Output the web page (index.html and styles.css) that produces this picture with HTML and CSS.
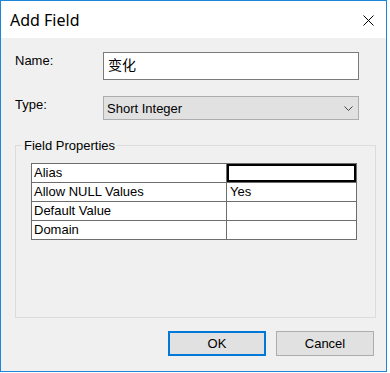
FILE: index.html
```html
<!DOCTYPE html>
<html lang="en">

<head>
  <meta charset="UTF-8" />
  <title>Add Field</title>
  <link rel="stylesheet" href="styles.css">
</head>

<body>
  <div class="window">
    <div class="titlebar">
      <span class="title">Add Field</span>
      <svg class="close" width="11" height="11" viewBox="0 0 11 11">
        <path d="M0.5 0.5 L10.5 10.5 M10.5 0.5 L0.5 10.5" stroke="#000" stroke-width="1" fill="none" />
      </svg>
    </div>

    <div class="content">
      <div class="row name-row">
        <span class="label">Name:</span>
        <div class="text-box">变化</div>
      </div>

      <div class="row type-row">
        <span class="label">Type:</span>
        <div class="combo">
          <span>Short Integer</span>
          <svg width="9" height="5" viewBox="0 0 9 5">
            <path d="M0.5 0.5 L4.5 4.5 L8.5 0.5" stroke="#444" stroke-width="1" fill="none" />
          </svg>
        </div>
      </div>

      <fieldset class="group">
        <legend>Field Properties</legend>
        <table class="props">
          <tr>
            <td class="key">Alias</td>
            <td class="val active"></td>
          </tr>
          <tr>
            <td class="key">Allow NULL Values</td>
            <td class="val">Yes</td>
          </tr>
          <tr>
            <td class="key">Default Value</td>
            <td class="val"></td>
          </tr>
          <tr>
            <td class="key">Domain</td>
            <td class="val"></td>
          </tr>
        </table>
      </fieldset>

      <div class="buttons">
        <button type="button" class="btn default">OK</button>
        <button type="button" class="btn">Cancel</button>
      </div>
    </div>
  </div>
</body>

</html>
```

FILE: styles.css
```css
* {
  margin: 0;
  padding: 0;
  box-sizing: border-box;
}

body {
  background: #fff;
  font-family: 'Liberation Sans', Arial, sans-serif;
  font-size: 13px;
  line-height: 15px;
  color: #000;
}

.window {
  width: 387px;
  height: 372px;
  border: 1px solid #1c87d9;
  background: #f0f0f0;
  display: flex;
  flex-direction: column;
}

.titlebar {
  height: 37px;
  background: #fff;
  display: flex;
  align-items: center;
  justify-content: space-between;
  padding: 0 12px 0 9px;
}

.title {
  font-family: 'Noto Sans', sans-serif;
  font-size: 16px;
  line-height: 18px;
}

.close {
  display: block;
  margin-top: 1px;
}

.content {
  padding: 14px 12px 0 14px;
}

.row {
  display: flex;
  align-items: flex-start;
}

.label {
  width: 88px;
  padding-top: 1px;
}

.text-box {
  width: 256px;
  height: 28px;
  background: #fff;
  border: 1px solid #7a7a7a;
  padding: 1px 0 0 4px;
  font-family: 'Noto Sans CJK SC', sans-serif;
  font-size: 14px;
  line-height: 20px;
}

.type-row {
  margin-top: 16px;
}

.combo {
  width: 256px;
  height: 24px;
  background: #e1e1e1;
  border: 1px solid #adadad;
  display: flex;
  align-items: center;
  justify-content: space-between;
  padding: 1px 5px 0 3px;
}

.combo svg {
  display: block;
}

.group {
  width: 361px;
  height: 180px;
  margin-top: 18px;
  border: 1px solid #dcdcdc;
  padding: 0;
}

.group legend {
  margin-left: 6px;
  padding: 0 2px;
}

.props {
  border-collapse: collapse;
  width: 326px;
  margin: 10px 0 0 15px;
  background: #fff;
}

.props td {
  border: 1px solid #6d6d6d;
  height: 19px;
  padding: 1px 2px 0;
  vertical-align: top;
}

.props .key {
  width: 195px;
}

.props .val {
  padding-left: 3px;
}

.props .active {
  box-shadow: inset 0 0 0 2px #000;
}

.buttons {
  display: flex;
  justify-content: flex-end;
  gap: 10px;
  margin-top: 13px;
}

.btn {
  width: 98px;
  height: 25px;
  background: #e1e1e1;
  border: 1px solid #adadad;
  font-family: 'Liberation Sans', Arial, sans-serif;
  font-size: 13px;
  color: #000;
}

.btn.default {
  border: 2px solid #0078d7;
}
```
